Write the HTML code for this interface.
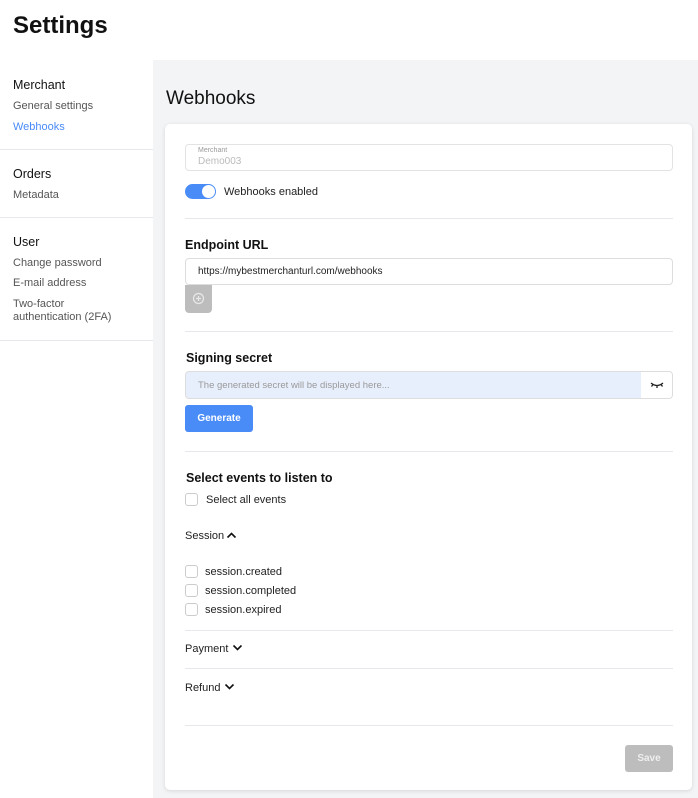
<!DOCTYPE html>
<html><head><style>
*{margin:0;padding:0;box-sizing:border-box}
body{width:698px;height:798px;overflow:hidden;background:#fff;font-family:"Liberation Sans",Arial,sans-serif;position:relative;color:#111}
.a{position:absolute}
.main{left:153px;top:60px;width:545px;height:738px;background:#f3f4f6}
.card{left:165px;top:124px;width:527px;height:666px;background:#fff;border-radius:5px;box-shadow:0 1px 4px rgba(0,0,0,.12)}
.sh{font-size:12.5px;color:#111}
.si{font-size:11px;color:#555}
.hr{height:1px;background:#e5e7eb}
.cb{width:13px;height:13px;border:1px solid #ccc;border-radius:3px;background:#fff}
.lbl{font-size:11px;color:#222}
.h{font-size:12.5px;font-weight:bold;color:#111}
</style></head><body>
<div class="a" style="left:13px;top:12px;font-size:24px;font-weight:bold">Settings</div>
<div class="a main"></div>
<div class="a sh" style="left:13px;top:78px">Merchant</div>
<div class="a si" style="left:13px;top:100px">General settings</div>
<div class="a si" style="left:13px;top:121px;color:#4a8cf7">Webhooks</div>
<div class="a hr" style="left:0;top:149px;width:153px"></div>
<div class="a sh" style="left:13px;top:167px">Orders</div>
<div class="a si" style="left:13px;top:189px">Metadata</div>
<div class="a hr" style="left:0;top:217px;width:153px"></div>
<div class="a sh" style="left:13px;top:235px">User</div>
<div class="a si" style="left:13px;top:257px">Change password</div>
<div class="a si" style="left:13px;top:277px">E-mail address</div>
<div class="a si" style="left:13px;top:298px;line-height:13px">Two-factor<br>authentication (2FA)</div>
<div class="a hr" style="left:0;top:340px;width:153px"></div>

<div class="a" style="left:166px;top:88px;font-size:19px;color:#111">Webhooks</div>
<div class="a card"></div>
<div class="a" style="left:185px;top:144px;width:488px;height:27px;border:1px solid #e3e3e3;border-radius:4px"></div>
<div class="a" style="left:198px;top:147px;font-size:7px;color:#999">Merchant</div>
<div class="a" style="left:198px;top:156px;font-size:10px;color:#bbb">Demo003</div>
<div class="a" style="left:185px;top:184px;width:31px;height:15px;border-radius:8px;background:#4a8cf7"></div>
<div class="a" style="left:202px;top:185px;width:13px;height:13px;border-radius:50%;background:#fff"></div>
<div class="a lbl" style="left:224px;top:186px">Webhooks enabled</div>
<div class="a hr" style="left:185px;top:218px;width:488px"></div>
<div class="a h" style="left:185px;top:238px">Endpoint URL</div>
<div class="a" style="left:185px;top:258px;width:488px;height:27px;border:1px solid #ddd;border-radius:4px"></div>
<div class="a" style="left:198px;top:266px;font-size:10px;color:#222">https://mybestmerchanturl.com/webhooks</div>
<div class="a" style="left:185px;top:285px;width:27px;height:28px;background:#bdbdbd;border-radius:0 0 4px 4px"></div>
<svg class="a" style="left:192px;top:292px" width="13" height="13" viewBox="0 0 13 13"><circle cx="6.5" cy="6.5" r="5" fill="none" stroke="#e8e8e8" stroke-width="1.2"/><path d="M6.5 4v5M4 6.5h5" stroke="#e8e8e8" stroke-width="1.2"/></svg>
<div class="a hr" style="left:185px;top:331px;width:488px"></div>
<div class="a h" style="left:186px;top:351px">Signing secret</div>
<div class="a" style="left:185px;top:371px;width:488px;height:28px;border:1px solid #ddd;border-radius:4px;background:#e8effc;overflow:hidden"><div style="position:absolute;right:0;top:0;width:31px;height:28px;background:#fff"></div></div>
<div class="a" style="left:198px;top:380px;font-size:9.5px;color:#999">The generated secret will be displayed here...</div>
<svg class="a" style="left:650px;top:380px" width="14" height="10" viewBox="0 0 14 10"><path d="M1 3Q7 8 13 3M3 4.5L1.5 6.5M11 4.5L12.5 6.5M7 6v2" fill="none" stroke="#222" stroke-width="1.3"/></svg>
<div class="a" style="left:185px;top:405px;width:68px;height:27px;background:#4a8cf7;border-radius:3px;color:#fff;font-size:10px;font-weight:bold;text-align:center;line-height:27px">Generate</div>
<div class="a hr" style="left:185px;top:451px;width:488px"></div>
<div class="a h" style="left:186px;top:471px">Select events to listen to</div>
<div class="a cb" style="left:185px;top:493px"></div>
<div class="a lbl" style="left:206px;top:494px">Select all events</div>
<div class="a lbl" style="left:185px;top:530px">Session</div>
<svg class="a" style="left:226px;top:531px" width="11" height="8" viewBox="0 0 11 8"><path d="M1.5 6.5L5.5 2.5L9.5 6.5" fill="none" stroke="#111" stroke-width="1.6"/></svg>
<div class="a cb" style="left:185px;top:565px"></div>
<div class="a lbl" style="left:205px;top:566px">session.created</div>
<div class="a cb" style="left:185px;top:584px"></div>
<div class="a lbl" style="left:205px;top:585px">session.completed</div>
<div class="a cb" style="left:185px;top:603px"></div>
<div class="a lbl" style="left:205px;top:604px">session.expired</div>
<div class="a hr" style="left:185px;top:630px;width:488px"></div>
<div class="a lbl" style="left:185px;top:643px">Payment</div>
<svg class="a" style="left:232px;top:644px" width="11" height="8" viewBox="0 0 11 8"><path d="M1.5 1.5L5.5 5.5L9.5 1.5" fill="none" stroke="#111" stroke-width="1.6"/></svg>
<div class="a hr" style="left:185px;top:668px;width:488px"></div>
<div class="a lbl" style="left:185px;top:682px">Refund</div>
<svg class="a" style="left:224px;top:683px" width="11" height="8" viewBox="0 0 11 8"><path d="M1.5 1.5L5.5 5.5L9.5 1.5" fill="none" stroke="#111" stroke-width="1.6"/></svg>
<div class="a hr" style="left:185px;top:725px;width:488px"></div>
<div class="a" style="left:625px;top:745px;width:48px;height:27px;background:#bdbdbd;border-radius:3px;color:#eee;font-size:10px;font-weight:bold;text-align:center;line-height:27px">Save</div>
</body></html>
